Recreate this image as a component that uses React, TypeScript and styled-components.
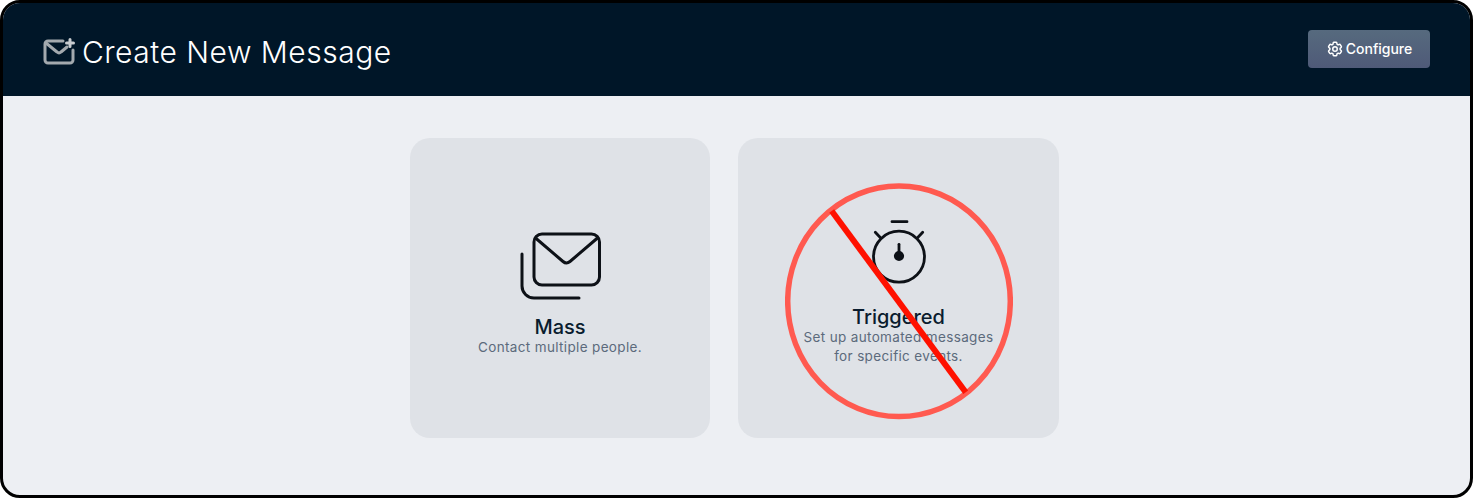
import React from 'react';
import styled, { createGlobalStyle } from 'styled-components';
import { HiOutlineCog6Tooth } from 'react-icons/hi2';

const Global = createGlobalStyle`
    html, body {
        margin: 0;
        padding: 0;
        background: #ffffff;
    }
    body {
        font-family: Inter, "Liberation Sans", sans-serif;
    }
`;

const Frame = styled.div`
    box-sizing: border-box;
    width: 1473px;
    height: 498px;
    border: 3px solid #000000;
    border-radius: 20px;
    overflow: hidden;
    display: flex;
    flex-direction: column;
    background: #edeff3;
`;

const Header = styled.header`
    box-sizing: border-box;
    flex: 0 0 93px;
    display: flex;
    align-items: center;
    justify-content: space-between;
    padding: 0 40px 2px 40px;
    background: #001628;
`;

const Title = styled.h1`
    display: flex;
    align-items: center;
    gap: 5px;
    margin: 6px 0 0;
    color: #ffffff;
    font-size: 30px;
    font-weight: 300;
    line-height: 34px;
    letter-spacing: 0.5px;
`;

const ConfigureButton = styled.button`
    width: 122px;
    height: 38px;
    display: flex;
    align-items: center;
    justify-content: center;
    gap: 2px;
    border: none;
    border-radius: 4px;
    color: #ffffff;
    font-family: inherit;
    font-size: 14px;
    font-weight: 500;
    background: linear-gradient(180deg, #566a7e 0%, #4f5a78 100%);
`;

const Content = styled.main`
    flex: 1;
    display: flex;
    justify-content: center;
    gap: 28px;
    padding: 42px 4px 0 0;
`;

const Card = styled.div<{ $wide?: boolean }>`
    position: relative;
    box-sizing: border-box;
    width: ${props => (props.$wide ? '321px' : '300px')};
    height: 300px;
    display: flex;
    flex-direction: column;
    align-items: center;
    justify-content: center;
    padding-top: ${props => (props.$wide ? '9px' : '13px')};
    border-radius: 20px;
    background: #dfe2e7;
`;

const CardTitle = styled.div`
    color: #0a1c2e;
    font-size: 20px;
    font-weight: 500;
    line-height: 24px;
    margin-top: 15px;
`;

const CardText = styled.div`
    margin-top: -1px;
    color: #5c6a7c;
    font-size: 13.500px;
    font-weight: 400;
    line-height: 19px;
    text-align: center;
    letter-spacing: 0.35px;
`;

const Prohibited = styled.svg`
    position: absolute;
    left: 47px;
    top: 45px;
`;

const MassSvg = styled.svg`
    margin-left: 2px;
`;

const HeaderMail = () => (
    <svg width="34" height="28" viewBox="0 0 34 28" fill="none" stroke="#a3a9ae" strokeWidth="3" strokeLinecap="round" strokeLinejoin="round">
        <path d="M20 3H5a3 3 0 0 0-3 3v16a3 3 0 0 0 3 3h22a3 3 0 0 0 3-3v-10" />
        <path d="M3 5l11 9a3 3 0 0 0 4 0l6-5" />
        <path d="M27 1.500v7M23.500 5h7" stroke="#c8ccd0" />
    </svg>
);

const MassIcon = () => (
    <MassSvg width="82" height="68" viewBox="0 0 82 68" fill="none" stroke="#0d1117" strokeWidth="3" strokeLinecap="round" strokeLinejoin="round">
        <rect x="14" y="2" width="65.500" height="51" rx="8" />
        <path d="M15.500 6L43 29.500a5.500 5.500 0 0 0 7 0L77.500 6" />
        <path d="M2 22v32a12 12 0 0 0 12 12h45" />
    </MassSvg>
);

const TimerIcon = () => (
    <svg width="54" height="71" viewBox="0 0 54 71" fill="none" stroke="#0d1117" strokeWidth="2.800" strokeLinecap="round">
        <circle cx="27" cy="37.700" r="25.500" />
        <path d="M20 2.700h15" />
        <path d="M3.300 13.300l4.700 5M50.700 13.300l-4.700 5" />
        <path d="M27 25.300V37" />
        <circle cx="27" cy="37" r="3.700" fill="#0d1117" />
    </svg>
);

const App = () => {
    return (
        <>
            <Global />
            <Frame>
                <Header>
                    <Title>
                        <HeaderMail />
                        Create New Message
                    </Title>
                    <ConfigureButton>
                        <HiOutlineCog6Tooth size={18} strokeWidth={2} />
                        Configure
                    </ConfigureButton>
                </Header>
                <Content>
                    <Card>
                        <MassIcon />
                        <CardTitle>Mass</CardTitle>
                        <CardText>Contact multiple people.</CardText>
                    </Card>
                    <Card $wide>
                        <TimerIcon />
                        <CardTitle>Triggered</CardTitle>
                        <CardText>
                            Set up automated messages
                            <br />
                            for specific events.
                        </CardText>
                        <Prohibited width="228" height="237" viewBox="0 0 228 237" fill="none">
                            <ellipse cx="114" cy="118.300" rx="111.300" ry="115.300" stroke="#ff5a50" strokeWidth="5.500" />
                            <path d="M46.700 28L180.700 209.300" stroke="#ff1100" strokeWidth="6" />
                        </Prohibited>
                    </Card>
                </Content>
            </Frame>
        </>
    );
};

export default App;
